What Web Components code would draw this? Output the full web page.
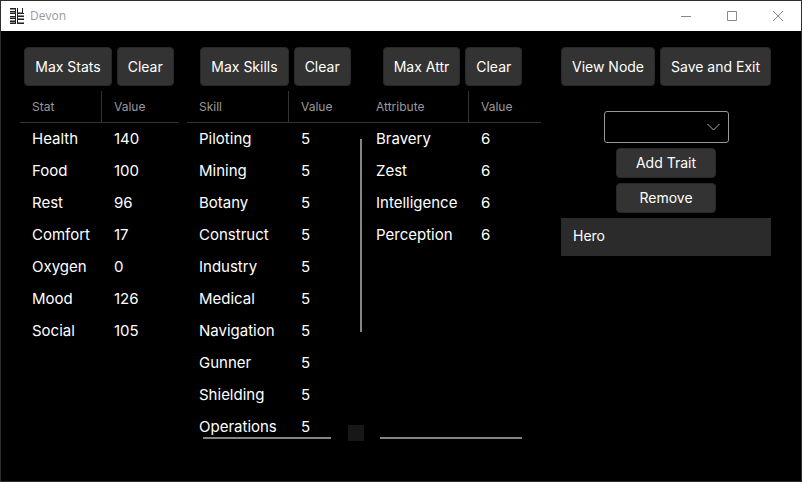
<!DOCTYPE html>
<html lang="en">
<head>
<meta charset="utf-8">
<title>Devon</title>
<style>
html, body { height: 100%; }
body { margin: 0; background: #000; color: #fff; font: 15px/20px Inter, "Liberation Sans", sans-serif; overflow: hidden; }
</style>
</head>
<body>
<app-window caption="Devon">
  <editor-panel style="--gap-end: 9px">
    <action-button slot="actions">Max Stats</action-button>
    <action-button slot="actions">Clear</action-button>
    <value-table heading="Stat" style="--name: 82px" rows="Health:140,Food:100,Rest:96,Comfort:17,Oxygen:0,Mood:126,Social:105"></value-table>
  </editor-panel>
  <editor-panel>
    <action-button slot="actions">Max Skills</action-button>
    <action-button slot="actions">Clear</action-button>
    <value-table heading="Skill" bars="both" style="--name: 102px; --bar-end: 33px" rows="Piloting:5,Mining:5,Botany:5,Construct:5,Industry:5,Medical:5,Navigation:5,Gunner:5,Shielding:5,Operations:5"></value-table>
  </editor-panel>
  <editor-panel style="--gap-end: 20px">
    <action-button slot="actions">Max Attr</action-button>
    <action-button slot="actions">Clear</action-button>
    <value-table heading="Attribute" bars="horizontal" style="--name: 105px; --bar-end: 19px" rows="Bravery:6,Zest:6,Intelligence:6,Perception:6"></value-table>
  </editor-panel>
  <editor-panel>
    <action-button slot="actions">View Node</action-button>
    <action-button slot="actions">Save and Exit</action-button>
    <trait-editor traits="Hero"></trait-editor>
  </editor-panel>
</app-window>
<script>
class AppWindow extends HTMLElement {
  connectedCallback() {
    this.attachShadow({ mode: 'open' }).innerHTML = `
      <style>
        :host { display: flex; flex-direction: column; box-sizing: border-box; height: 100vh; border: 1px solid #2f2f2f; background: #000; }
        header { display: flex; align-items: center; flex: none; height: 30px; padding-left: 8px; background: #fff; color: #999; }
        h1 { flex: 1; margin: 0 0 0 5px; font: 12px/16px "Open Sans", "Noto Sans", sans-serif; }
        svg { display: block; }
        header button { display: grid; place-items: center; width: 46px; height: 30px; padding: 0; border: 0; background: none; color: #888; }
        main { flex: 1; min-height: 0; display: grid; grid-template-columns: 167fr 177fr 197fr 210fr; padding: 16px 30px 40px 19px; }
      </style>
      <header>
        <svg width="16" height="16" viewBox="0 0 16 16" shape-rendering="crispEdges" aria-hidden="true">
          <path fill="#888" d="M1 1h5v1H1zM1 4h5v1H1zM1 9h5v1H1zM1 12h5v1H1zM1 14h5v1H1zM9 4h5v1H9zM9 7h6v1H9zM9 10h6v1H9zM9 14h6v1H9z"/>
          <path fill="#222" d="M1 0h6v1H1zM1 3h6v1H1zM1 5h6v1H1zM1 8h6v1H1zM1 10h6v1H1zM1 13h6v1H1zM1 15h6v1H1zM6 0h1v16H6zM8 0h1v16H8zM9 5h6v1H9zM13 0h1v6h-1zM9 8h6v1H9zM9 11h6v1H9zM9 15h6v1H9z"/>
        </svg>
        <h1></h1>
        <button aria-label="Minimize"><svg width="10" height="10"><path d="M0 5.500h10" stroke="currentColor"/></svg></button>
        <button aria-label="Maximize"><svg width="10" height="10"><path d="M.5.5h9v9h-9z" fill="none" stroke="currentColor"/></svg></button>
        <button aria-label="Close"><svg width="10" height="10"><path d="M0 0l10 10M10 0L0 10" stroke="currentColor"/></svg></button>
      </header>
      <main><slot></slot></main>`;
    this.shadowRoot.querySelector('h1').textContent = this.getAttribute('caption');
  }
}
class EditorPanel extends HTMLElement {
  connectedCallback() {
    this.attachShadow({ mode: 'open' }).innerHTML = `
      <style>
        :host { display: flex; flex-direction: column; min-width: 0; min-height: 0; padding-right: var(--gap-end, 0px); }
        nav { display: flex; justify-content: center; gap: 5px; flex: none; margin-bottom: 5px; }
      </style>
      <nav><slot name="actions"></slot></nav>
      <slot></slot>`;
  }
}
class ActionButton extends HTMLElement {
  connectedCallback() {
    this.attachShadow({ mode: 'open' }).innerHTML = `
      <style>
        :host { display: block; }
        button { box-sizing: border-box; width: 100%; height: var(--button-height, 39px); padding: 0 10px; border: 1px solid #282828; border-radius: 4px; background: #333; color: #fff; font: inherit; font-size: 14px; white-space: nowrap; }
      </style>
      <button><slot></slot></button>`;
  }
}
class ValueTable extends HTMLElement {
  connectedCallback() {
    const bars = this.getAttribute('bars');
    const rows = this.getAttribute('rows').split(',').map(r => r.split(':'));
    this.attachShadow({ mode: 'open' }).innerHTML = `
      <style>
        :host { display: block; flex: 1; min-height: 0; position: relative; overflow: hidden; }
        table { width: 100%; table-layout: fixed; border-collapse: separate; border-spacing: 0; }
        th, td { box-sizing: border-box; height: 32px; padding: 0 0 0 12px; text-align: left; white-space: nowrap; font-weight: 400; }
        th { border-bottom: 1px solid #333; color: #999; font-size: 12px; line-height: 16px; }
        th:first-child { width: var(--name); border-right: 1px solid #333; }
        .bar { position: absolute; background: #858585; }
        .h { left: 16px; right: var(--bar-end); bottom: 2px; height: 2px; }
        .v { right: 2px; top: 48px; width: 2px; height: 55%; }
        .corner { position: absolute; right: 0; bottom: 0; width: 16px; height: 16px; background: #171717; }
      </style>
      <table>
        <thead><tr><th scope="col">${this.getAttribute('heading')}</th><th scope="col">Value</th></tr></thead>
        <tbody>${rows.map(([n, v]) => `<tr><td>${n}</td><td>${v}</td></tr>`).join('')}</tbody>
      </table>
      ${bars ? '<div class="bar h"></div>' : ''}
      ${bars === 'both' ? '<div class="bar v"></div><div class="corner"></div>' : ''}`;
  }
}
class TraitEditor extends HTMLElement {
  connectedCallback() {
    this.attachShadow({ mode: 'open' }).innerHTML = `
      <style>
        :host { display: flex; flex-direction: column; align-items: center; gap: 5px; margin-top: 20px; }
        .pick { display: grid; width: 125px; }
        .pick > * { grid-area: 1 / 1; }
        select { appearance: none; box-sizing: border-box; width: 100%; height: 32px; padding: 0 32px 0 12px; border: 1px solid #999; border-radius: 3px; background: #000; color: #fff; font: inherit; }
        svg { place-self: center end; margin-right: 9px; pointer-events: none; }
        action-button { --button-height: 30px; width: 100px; }
        ul { align-self: stretch; margin: 0; padding: 0; list-style: none; background: #2b2b2b; font-size: 14px; }
        li { padding: 8px 12px 10px; }
      </style>
      <div class="pick">
        <select aria-label="Trait"></select>
        <svg width="13" height="8" viewBox="0 0 13 8" aria-hidden="true"><path d="M.5 1l6 6 6-6" fill="none" stroke="#aaa"/></svg>
      </div>
      <action-button>Add Trait</action-button>
      <action-button>Remove</action-button>
      <ul>${this.getAttribute('traits').split(',').map(t => `<li>${t}</li>`).join('')}</ul>`;
  }
}
customElements.define('app-window', AppWindow);
customElements.define('editor-panel', EditorPanel);
customElements.define('action-button', ActionButton);
customElements.define('value-table', ValueTable);
customElements.define('trait-editor', TraitEditor);
</script>
</body>
</html>
